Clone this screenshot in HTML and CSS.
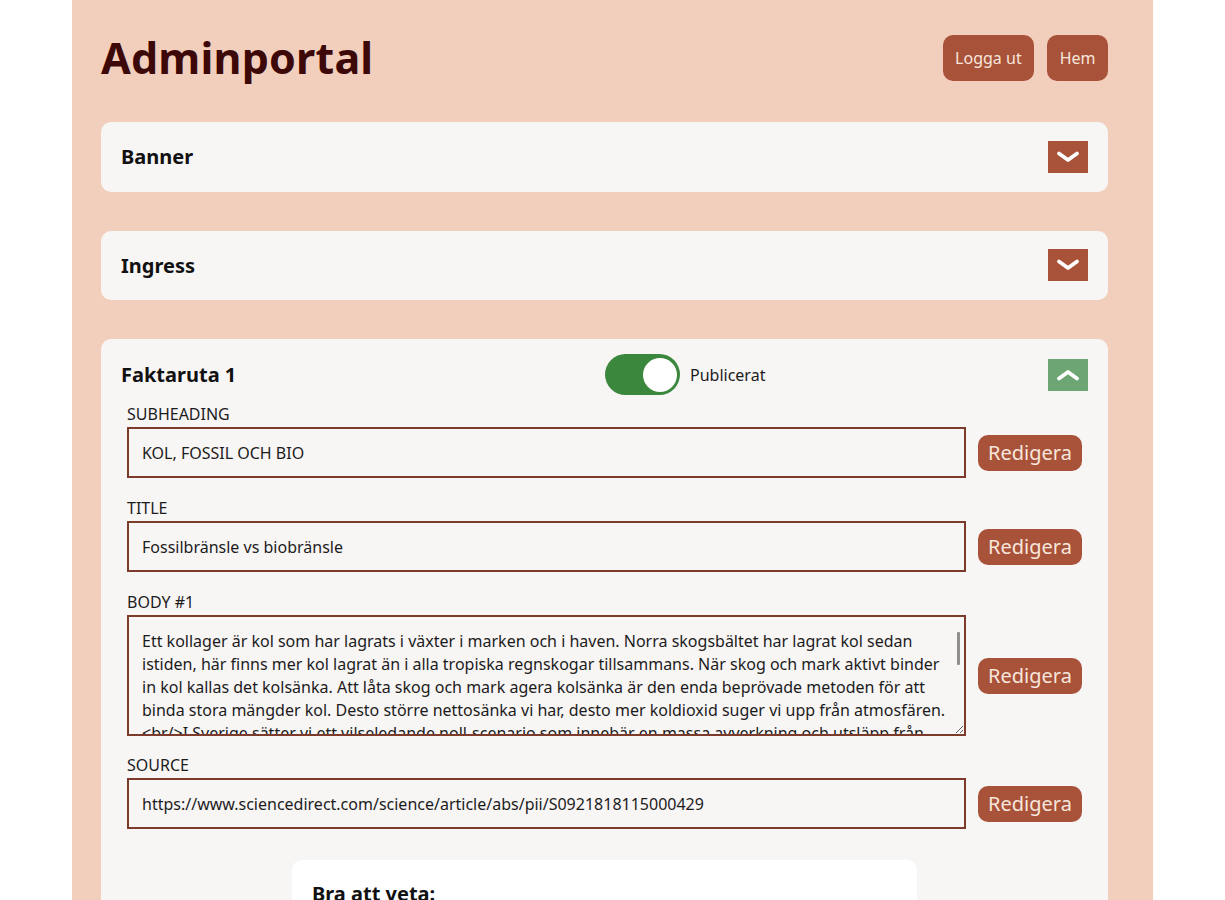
FILE: index.html
```html
<!DOCTYPE html>
<html lang="sv">
<head>
<meta charset="utf-8">
<title>Adminportal</title>
<link rel="stylesheet" href="styles.css">
</head>
<body>
<main class="page">
  <header class="top">
    <h1 class="brand">Adminportal</h1>
    <nav class="nav">
      <button class="nav-btn">Logga ut</button>
      <button class="nav-btn">Hem</button>
    </nav>
  </header>

  <section class="card">
    <div class="card-head">
      <h2 class="card-title">Banner</h2>
      <button class="chev chev-down" aria-label="Öppna">
        <svg viewBox="0 0 24 12" width="24" height="12"><polyline points="3,2.5 12,9 21,2.5" fill="none" stroke="#fff" stroke-width="3.8" stroke-linecap="round" stroke-linejoin="round"/></svg>
      </button>
    </div>
  </section>

  <section class="card">
    <div class="card-head">
      <h2 class="card-title">Ingress</h2>
      <button class="chev chev-down" aria-label="Öppna">
        <svg viewBox="0 0 24 12" width="24" height="12"><polyline points="3,2.5 12,9 21,2.5" fill="none" stroke="#fff" stroke-width="3.8" stroke-linecap="round" stroke-linejoin="round"/></svg>
      </button>
    </div>
  </section>

  <section class="card card-open">
    <div class="card-head">
      <h2 class="card-title">Faktaruta 1</h2>
      <div class="publish">
        <span class="switch"><span class="knob"></span></span>
        <span class="publish-label">Publicerat</span>
      </div>
      <button class="chev chev-up" aria-label="Stäng">
        <svg viewBox="0 0 24 12" width="24" height="12"><polyline points="3,9.5 12,3 21,9.5" fill="none" stroke="#fff" stroke-width="3.8" stroke-linecap="round" stroke-linejoin="round"/></svg>
      </button>
    </div>

    <div class="fields">
      <div class="field">
        <label class="field-label">SUBHEADING</label>
        <div class="field-row">
          <input class="input" type="text" value="KOL, FOSSIL OCH BIO">
          <button class="edit-btn">Redigera</button>
        </div>
      </div>

      <div class="field">
        <label class="field-label">TITLE</label>
        <div class="field-row">
          <input class="input" type="text" value="Fossilbränsle vs biobränsle">
          <button class="edit-btn">Redigera</button>
        </div>
      </div>

      <div class="field field-body">
        <label class="field-label">BODY #1</label>
        <div class="field-row">
          <div class="textarea-wrap">
            <textarea class="input textarea">Ett kollager är kol som har lagrats i växter i marken och i haven. Norra skogsbältet har lagrat kol sedan istiden, här finns mer kol lagrat än i alla tropiska regnskogar tillsammans. När skog och mark aktivt binder in kol kallas det kolsänka. Att låta skog och mark agera kolsänka är den enda beprövade metoden för att binda stora mängder kol. Desto större nettosänka vi har, desto mer koldioxid suger vi upp från atmosfären. &lt;br/&gt;I Sverige sätter vi ett vilseledande noll-scenario som innebär en massa avverkning och utsläpp från skogen, vilket gör att den verkliga klimatnyttan av biobränsle blir svår att bedöma. Fossilt kol har legat lagrat i miljontals år och när det förbränns tillförs atmosfären nytt kol som inte tidigare fanns i kretsloppet. &lt;br/&gt;Biobränsle räknas ofta som klimatneutralt, men när skog avverkas och eldas upp släpps kolet ut direkt, medan det tar lång tid för ny skog att växa upp och binda samma mängd kol igen. Under tiden ökar halten koldioxid i atmosfären. &lt;br/&gt;Därför är det viktigt att skilja mellan kol som redan finns i kretsloppet och kol som tas upp ur marken i form av olja, kol och gas.</textarea>
            <span class="fake-thumb" aria-hidden="true"></span>
          </div>
          <button class="edit-btn">Redigera</button>
        </div>
      </div>

      <div class="field">
        <label class="field-label">SOURCE</label>
        <div class="field-row">
          <input class="input" type="text" value="https://www.sciencedirect.com/science/article/abs/pii/S0921818115000429">
          <button class="edit-btn">Redigera</button>
        </div>
      </div>
    </div>

    <div class="preview">
      <h3 class="preview-title">Bra att veta:</h3>
      <p class="preview-sub">KOL, FOSSIL OCH BIO</p>
    </div>
  </section>
</main>
</body>
</html>
```

FILE: styles.css
```css
* { box-sizing: border-box; }

html, body {
  margin: 0;
  padding: 0;
  background: #ffffff;
}

body {
  font-family: "Noto Sans", "Open Sans", "DejaVu Sans", sans-serif;
  color: #1c1c1c;
}

.page {
  width: 1081px;
  margin: 0 auto;
  background: #f2cfbd;
  min-height: 1400px;
  padding: 35px 45px 40px 29px;
}

.top {
  display: flex;
  align-items: center;
  justify-content: space-between;
  height: 45px;
  margin-bottom: 42px;
}

.brand {
  margin: 0;
  font-size: 43px;
  font-weight: 700;
  color: #3d0808;
  line-height: 45px;
  letter-spacing: 0.2px;
}

.nav {
  display: flex;
  gap: 13px;
}

.nav-btn {
  font-family: inherit;
  font-size: 16px;
  color: #f7e6dc;
  background: #a9523a;
  border: none;
  border-radius: 10px;
  height: 46px;
  padding: 0 12.5px;
  cursor: pointer;
}

.card {
  background: #f8f5f5;
  border-radius: 10px;
  margin-bottom: 39px;
}

.card-head {
  display: flex;
  align-items: center;
  justify-content: space-between;
  padding: 0 20px;
  height: 69.5px;
}

.card-title {
  margin: 0;
  font-size: 20px;
  font-weight: 700;
  color: #111;
}

.chev {
  width: 40px;
  height: 32px;
  border: none;
  padding: 0;
  display: flex;
  align-items: center;
  justify-content: center;
  cursor: pointer;
}

.chev-down { background: #a9523a; }
.chev-up { background: #6da674; }

.card-open { padding-bottom: 40px; }

.card-open .card-head {
  position: relative;
  height: 65px;
  padding-top: 6px;
}

.publish {
  position: absolute;
  left: 504px;
  top: 15px;
  display: flex;
  align-items: center;
  gap: 10px;
}

.switch {
  width: 75px;
  height: 41px;
  border-radius: 21px;
  background: #3a873d;
  display: flex;
  align-items: center;
  justify-content: flex-end;
  padding-right: 3px;
}

.knob {
  width: 34px;
  height: 34px;
  border-radius: 50%;
  background: #fff;
}

.publish-label {
  font-size: 16px;
  color: #1c1c1c;
}

.fields {
  padding: 0 26px;
  display: flex;
  flex-direction: column;
  gap: 20px;
}

.field-body { margin-bottom: -1px; }

.field-label {
  display: block;
  font-size: 16px;
  line-height: 20px;
  color: #1c1c1c;
  margin-bottom: 3px;
}

.field-row {
  display: flex;
  align-items: center;
  gap: 12px;
}

.input {
  flex: 1;
  height: 51px;
  border: 2px solid #7c3b2b;
  background: #f8f5f5;
  font-family: inherit;
  font-size: 16px;
  color: #1c1c1c;
  padding: 0 13px;
  outline: none;
}

.textarea-wrap {
  flex: 1;
  position: relative;
  display: flex;
}

.textarea {
  height: 121px;
  line-height: 23px;
  padding: 13px 16px 0 13px;
  resize: vertical;
  display: block;
}

.fake-thumb {
  position: absolute;
  right: 6px;
  top: 17px;
  width: 3px;
  height: 33px;
  background: #8f8f8f;
  border-radius: 1px;
}

.edit-btn {
  width: 104px;
  height: 36px;
  border: none;
  border-radius: 10px;
  background: #a9523a;
  color: #f7e6dc;
  font-family: inherit;
  font-size: 20px;
  cursor: pointer;
  padding: 0;
}

.preview {
  width: 625px;
  margin: 31px auto 0;
  background: #ffffff;
  border-radius: 10px;
  padding: 20px 20px 24px;
}

.preview-title {
  margin: 0 0 10px;
  font-size: 20px;
  line-height: 27px;
  font-weight: 700;
  color: #111;
}

.preview-sub {
  margin: 0;
  font-size: 16px;
}
```
